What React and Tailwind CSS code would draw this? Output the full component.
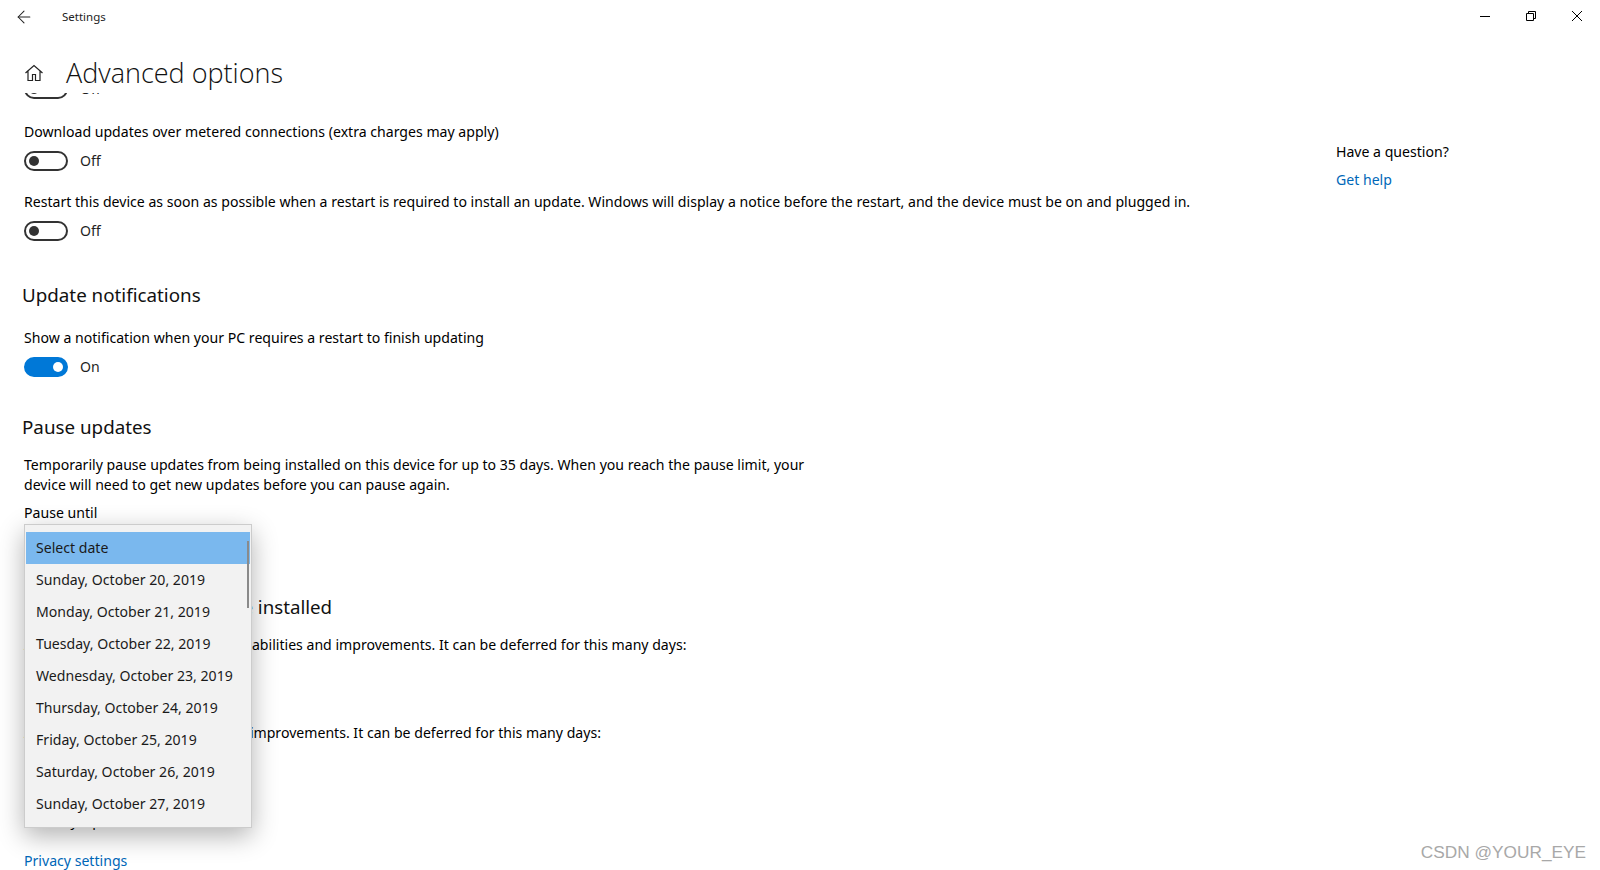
import React from 'react';
import { ArrowLeft } from 'lucide-react';

const dates = [
  'Select date',
  'Sunday, October 20, 2019',
  'Monday, October 21, 2019',
  'Tuesday, October 22, 2019',
  'Wednesday, October 23, 2019',
  'Thursday, October 24, 2019',
  'Friday, October 25, 2019',
  'Saturday, October 26, 2019',
  'Sunday, October 27, 2019',
];

const Toggle = ({ on, className = '' }) => (
  <div className={`flex items-center h-5 ${className}`}>
    <div
      className={`flex items-center w-[44px] h-5 rounded-full border-2 px-[3px] ${
        on ? 'bg-[#0078d7] border-[#0078d7] justify-end' : 'border-[#333333] justify-start'
      }`}
    >
      <div className={`w-[10px] h-[10px] rounded-full ${on ? 'bg-white' : 'bg-[#333333]'}`} />
    </div>
    <span className="ml-3 text-[#1f1f1f]">{on ? 'On' : 'Off'}</span>
  </div>
);

const Heading = ({ className = '', children }) => (
  <h2 className={`text-[18.8px] leading-7 text-[#111111] ${className}`}>{children}</h2>
);

const App = () => {
  return (
    <div className="relative flex flex-col h-[870px] overflow-hidden bg-white text-[14.1px] leading-5 text-black font-['Noto_Sans',sans-serif]">
      {/* Title bar */}
      <div className="flex items-center h-8 shrink-0">
        <ArrowLeft className="w-5 h-5 ml-[14px] mt-[1px] text-[#222222]" strokeWidth={1.25} />
        <span className="ml-[28px] mt-[2px] text-[11.5px] text-[#222222]">Settings</span>
        <div className="flex items-center ml-auto text-black">
          <svg className="w-[46px] h-4" viewBox="0 0 46 16" fill="none" stroke="currentColor">
            <path d="M18 8.5h10" />
          </svg>
          <svg className="w-[46px] h-4" viewBox="0 0 46 16" fill="none" stroke="currentColor">
            <path d="M18.5 5.5h7v7h-7zM20.5 5.5v-2h7v7h-2" />
          </svg>
          <svg className="w-[46px] h-4" viewBox="0 0 46 16" fill="none" stroke="currentColor">
            <path d="M18 3l10 10M28 3l-10 10" />
          </svg>
        </div>
      </div>

      {/* Page header */}
      <div className="flex items-center h-[61px] shrink-0 pl-[24px] pt-[20px]">
        <svg className="w-5 h-5 text-[#222222]" viewBox="0 0 20 20" fill="none" stroke="currentColor" strokeWidth="1.2">
          <path d="M1.5 10L10 2.5l8.5 7.5M4 8v9.5h4.5V11.5h3v6H16V8" />
        </svg>
        <h1 className="ml-[22px] text-[27px] leading-9 font-light text-[#111111] font-['Open_Sans',sans-serif]">
          Advanced options
        </h1>
      </div>

      <div className="flex flex-1 min-h-0 overflow-hidden">
        {/* Scrolled content */}
        <div className="flex-1 min-w-0 pl-6 overflow-hidden">
          <Toggle className="-mt-[14px]" />
          <p className="mt-[23px]">Download updates over metered connections (extra charges may apply)</p>
          <Toggle className="mt-[9px]" />
          <p className="mt-[21px]">
            Restart this device as soon as possible when a restart is required to install an update. Windows will display a notice before the restart, and the device must be on and plugged in.
          </p>
          <Toggle className="mt-[9px]" />

          <Heading className="mt-[40px] -ml-[2px]">Update notifications</Heading>
          <p className="mt-[19px]">Show a notification when your PC requires a restart to finish updating</p>
          <Toggle on className="mt-[9px]" />

          <Heading className="mt-[36px] -ml-[2px]">Pause updates</Heading>
          <p className="mt-[14px] w-[800px]">
            Temporarily pause updates from being installed on this device for up to 35 days. When you reach the pause limit, your device will need to get new updates before you can pause again.
          </p>
          <p className="mt-2">Pause until</p>

          <div className="relative h-[70px]">
            {/* Open dropdown */}
            <div className="absolute z-10 top-[1px] left-0 w-[228px] h-[304px] pt-[7px] px-[1px] bg-[#f2f2f2] border border-[#cccccc] shadow-[0_8px_24px_rgba(0,0,0,0.3)]">
              {dates.map((d, i) => (
                <div
                  key={d}
                  className={`flex items-center h-8 pl-[10px] text-[#1a1a1a] ${i === 0 ? 'bg-[#7ab8ee]' : ''}`}
                >
                  {d}
                </div>
              ))}
              <div className="absolute top-[16px] right-[2px] w-[2px] h-[67px] bg-[#8a8a8a]" />
            </div>
          </div>

          <h2 className="ml-[1px] text-[18.7px] leading-7 text-[#111111]">Choose when updates are installed</h2>
          <p className="mt-[14px]">A feature update includes new capabilities and improvements. It can be deferred for this many days:</p>
          <p className="mt-[68px]">A quality update includes security improvements. It can be deferred for this many days:</p>
          <p className="mt-[68px]">Delivery Optimization</p>
          <p className="mt-[20px] text-[#0067b8]">Privacy settings</p>
        </div>

        {/* Side panel */}
        <div className="w-[264px] shrink-0 pt-[49px]">
          <p>Have a question?</p>
          <p className="mt-2 text-[#0067b8]">Get help</p>
        </div>
      </div>

      <span className="absolute right-[14px] bottom-[6px] text-[17.25px] leading-6 text-[#a8a8a8] font-['Liberation_Sans',sans-serif]">
        CSDN @YOUR_EYE
      </span>
    </div>
  );
};

export default App;
